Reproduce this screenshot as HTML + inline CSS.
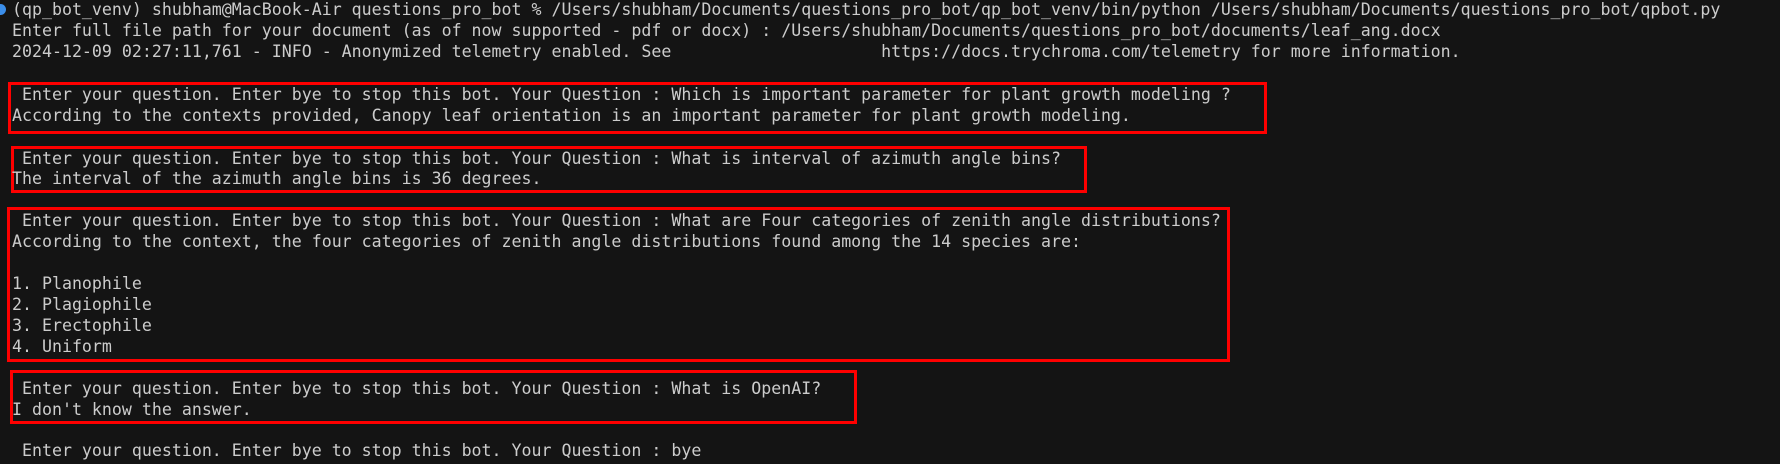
<!DOCTYPE html>
<html><head><meta charset="utf-8"><style>
html,body{margin:0;padding:0;background:#141414;width:1780px;height:464px;overflow:hidden;position:relative}
.l{position:absolute;left:12px;height:22px;line-height:22px;font-family:"DejaVu Sans Mono","Liberation Mono",monospace;font-size:16.6px;color:#cccccc;white-space:pre;letter-spacing:0px}
.b{position:absolute;border:3px solid #ff0000;box-sizing:border-box}
.dot{position:absolute;left:-5px;top:4px;width:11px;height:11px;border-radius:50%;background:#3b8eea}
</style></head><body>
<div class="dot"></div>
<div class="l" style="top:-1px">(qp_bot_venv) shubham@MacBook-Air questions_pro_bot % /Users/shubham/Documents/questions_pro_bot/qp_bot_venv/bin/python /Users/shubham/Documents/questions_pro_bot/qpbot.py</div>
<div class="l" style="top:20px">Enter full file path for your document (as of now supported - pdf or docx) : /Users/shubham/Documents/questions_pro_bot/documents/leaf_ang.docx</div>
<div class="l" style="top:41px">2024-12-09 02:27:11,761 - INFO - Anonymized telemetry enabled. See                     https://docs.trychroma.com/telemetry for more information.</div>

<div class="b" style="left:8px;top:82px;width:1259px;height:52px"></div>
<div class="l" style="top:84px"> Enter your question. Enter bye to stop this bot. Your Question : Which is important parameter for plant growth modeling ?</div>
<div class="l" style="top:105px">According to the contexts provided, Canopy leaf orientation is an important parameter for plant growth modeling.</div>

<div class="b" style="left:11px;top:146px;width:1076px;height:47px"></div>
<div class="l" style="top:148px"> Enter your question. Enter bye to stop this bot. Your Question : What is interval of azimuth angle bins?</div>
<div class="l" style="top:168px">The interval of the azimuth angle bins is 36 degrees.</div>

<div class="b" style="left:7px;top:207px;width:1223px;height:155px"></div>
<div class="l" style="top:210px"> Enter your question. Enter bye to stop this bot. Your Question : What are Four categories of zenith angle distributions?</div>
<div class="l" style="top:231px">According to the context, the four categories of zenith angle distributions found among the 14 species are:</div>
<div class="l" style="top:273px">1. Planophile</div>
<div class="l" style="top:294px">2. Plagiophile</div>
<div class="l" style="top:315px">3. Erectophile</div>
<div class="l" style="top:336px">4. Uniform</div>

<div class="b" style="left:10px;top:370px;width:847px;height:54px"></div>
<div class="l" style="top:378px"> Enter your question. Enter bye to stop this bot. Your Question : What is OpenAI?</div>
<div class="l" style="top:399px">I don't know the answer.</div>

<div class="l" style="top:440px"> Enter your question. Enter bye to stop this bot. Your Question : bye</div>
</body></html>
